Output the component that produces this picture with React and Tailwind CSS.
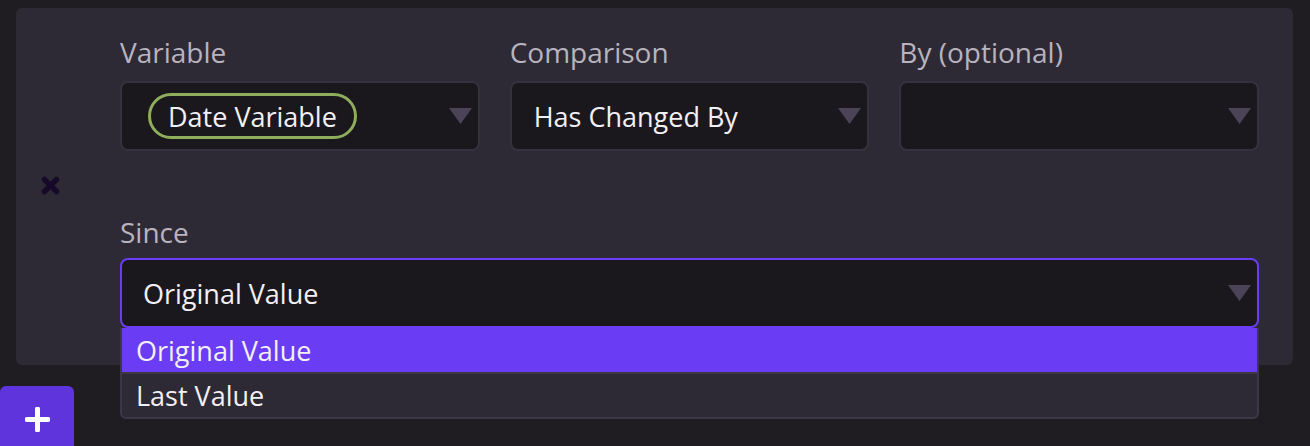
import React from 'react';

function Caret() {
    return (
        <svg width="23" height="16" viewBox="0 0 23 16" className="shrink-0">
            <polygon points="0,0 23,0 11.5,16" fill="#4b4458" />
        </svg>
    );
}

function Field({ label, children }) {
    return (
        <div>
            <div className="text-[28px] leading-[34px] text-[#b8b3be] mb-3">{label}</div>
            <div className="h-[70px] rounded-lg border-2 border-[#37313f] bg-[#1a181d] flex items-center pl-[22px] pr-[6px]">
                <div className="flex-1 min-w-0 flex items-center">{children}</div>
                <Caret />
            </div>
        </div>
    );
}

export default function App() {
    return (
        <div className="min-h-screen overflow-hidden bg-[#1f1d22] pt-2 font-['Open_Sans',sans-serif] text-[#f2f0f4]">
            <div className="ml-4 mr-[17px] flex rounded-md bg-[#2e2a35] pl-[25px] pr-[34px] pt-[27px] pb-[37px]">
                <div className="w-[19px] flex items-center pt-[7px]">
                    <svg width="19" height="19" viewBox="0 0 19 19">
                        <path d="M3.5 3.5 L15.5 15.5 M15.5 3.5 L3.5 15.5" stroke="#170a28" strokeWidth="5.5" strokeLinecap="round" />
                    </svg>
                </div>

                <div className="ml-[60px] flex-1">
                    <div className="grid grid-cols-3 gap-x-[30px]">
                        <Field label="Variable">
                            <span className="ml-[4px] h-[46px] rounded-full border-[3px] border-[#8fae5b] px-[17px] flex items-center text-[27px] leading-none">
                                Date Variable
                            </span>
                        </Field>
                        <Field label="Comparison">
                            <span className="text-[27px] leading-none">Has Changed By</span>
                        </Field>
                        <Field label="By (optional)" />
                    </div>

                    <div className="mt-16">
                        <div className="text-[28px] leading-[34px] text-[#b8b3be] mb-[9px]">Since</div>
                        <div className="relative">
                            <div className="h-[70px] rounded-lg border-2 border-[#6a3df4] bg-[#1a181d] flex items-center pl-[21px] pr-[6px]">
                                <span className="flex-1 text-[27px] leading-none">Original Value</span>
                                <Caret />
                            </div>
                            {/* open dropdown */}
                            <div className="absolute top-full left-0 right-0 z-10 bg-[#2e2a35] border-x-2 border-b-2 border-[#3d3646] rounded-b-md overflow-hidden">
                                <div className="h-[44px] bg-[#6a3df4] flex items-center px-[14px] text-[27px] leading-none">
                                    Original Value
                                </div>
                                <div className="h-[2px] bg-[#3d3646]" />
                                <div className="h-[43px] flex items-center px-[14px] text-[27px] leading-none">
                                    Last Value
                                </div>
                            </div>
                        </div>
                    </div>
                </div>
            </div>

            <button className="mt-[21px] w-[74px] h-[66px] rounded-t-md bg-[#5f34dc] flex items-center justify-center">
                <svg width="25" height="25" viewBox="0 0 25 25">
                    <path d="M12.5 2 V23 M2 12.5 H23" stroke="#ffffff" strokeWidth="5" strokeLinecap="round" />
                </svg>
            </button>
        </div>
    );
}
